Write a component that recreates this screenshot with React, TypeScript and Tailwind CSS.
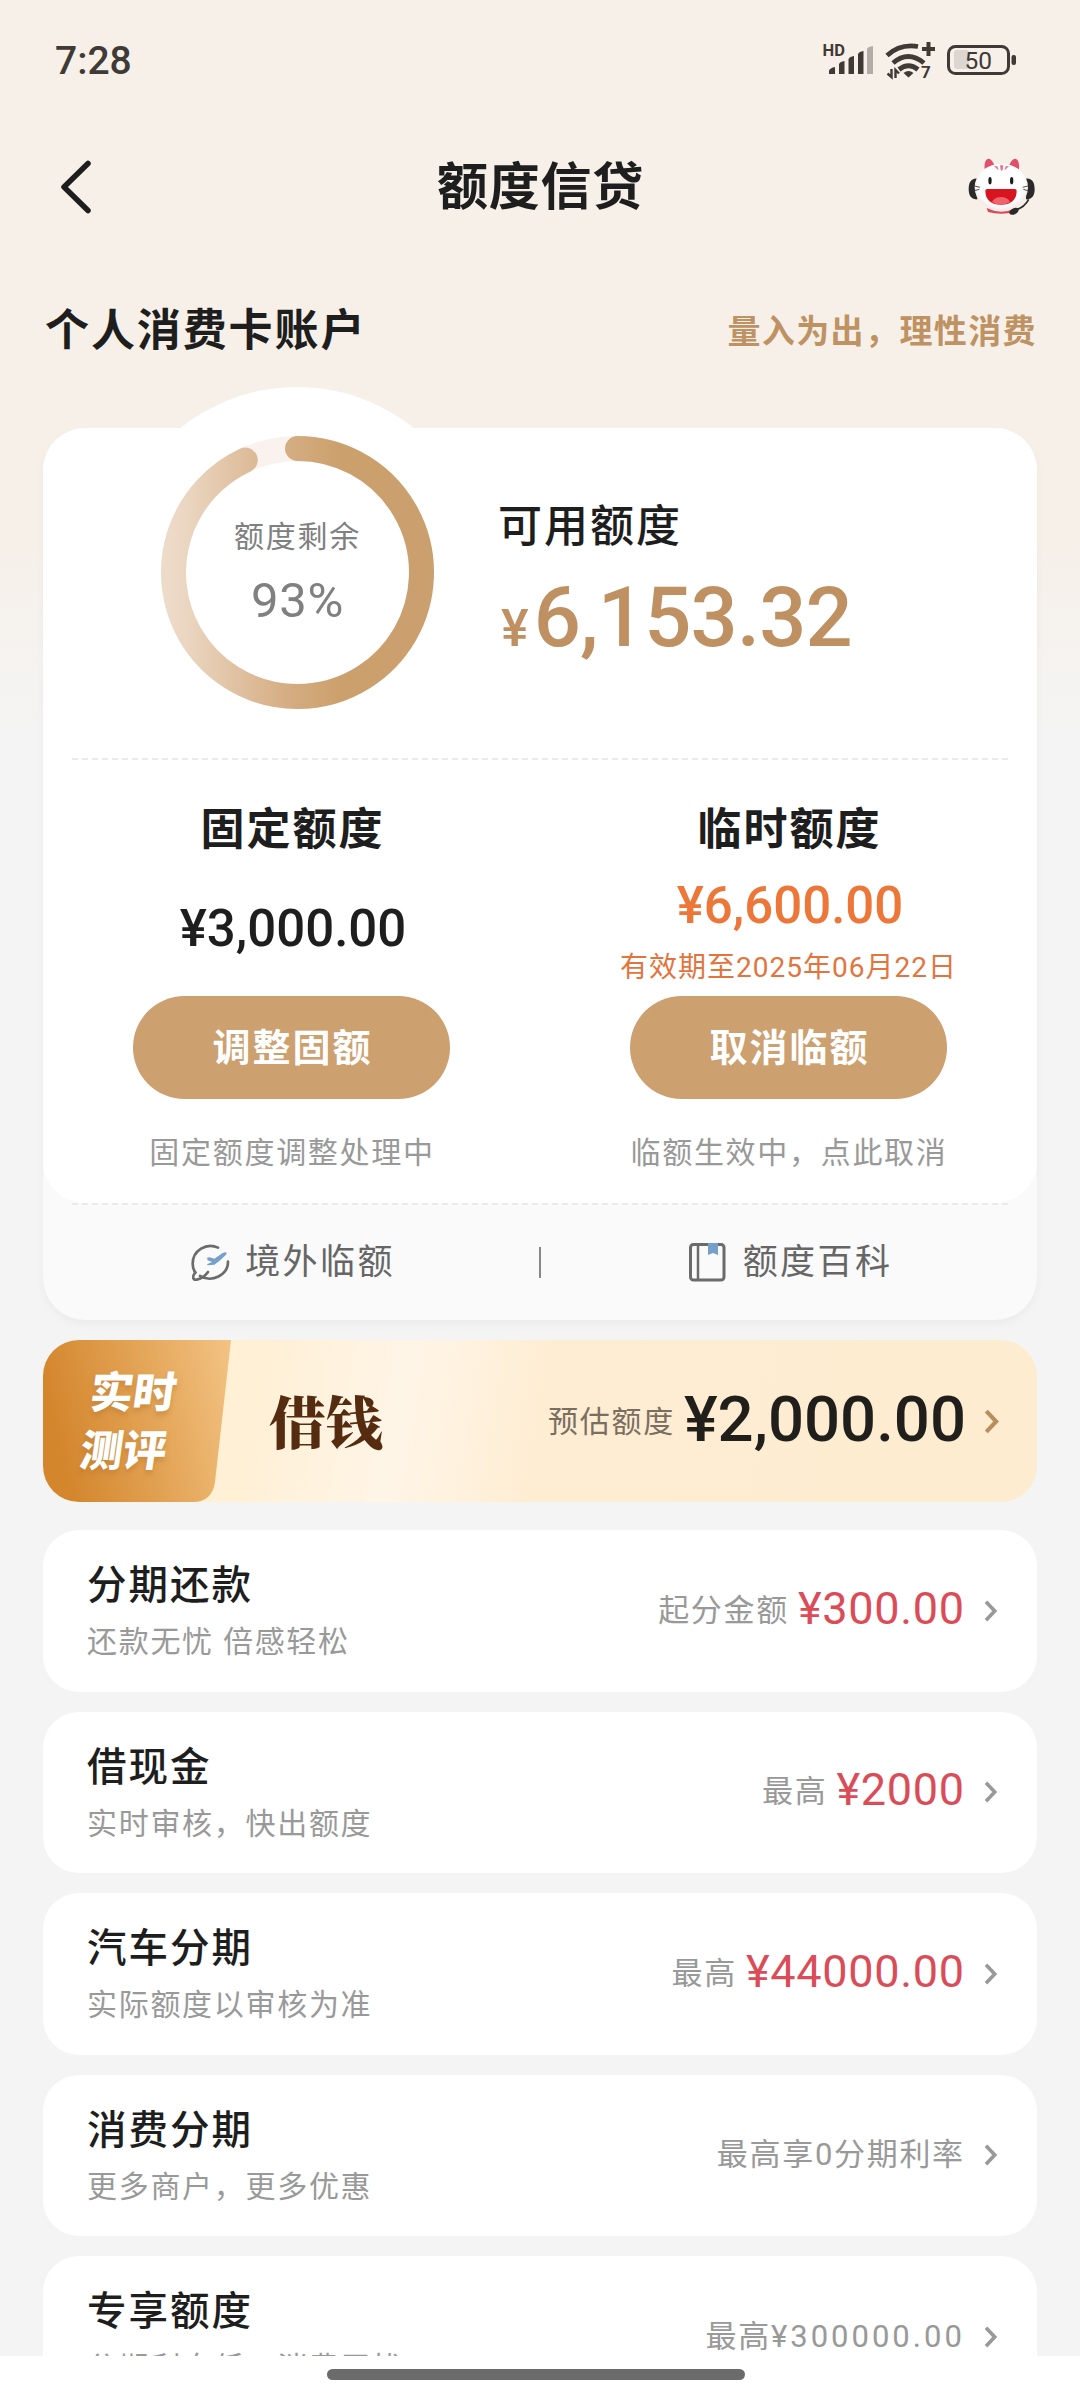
import type { ReactNode } from "react";

interface ProductItem {
  title: string;
  subtitle: string;
  label: string;
  amount?: string;
  plainAmount?: string;
}

const PRODUCTS: ProductItem[] = [
  { title: "分期还款", subtitle: "还款无忧 倍感轻松", label: "起分金额", amount: "¥300.00" },
  { title: "借现金", subtitle: "实时审核，快出额度", label: "最高", amount: "¥2000" },
  { title: "汽车分期", subtitle: "实际额度以审核为准", label: "最高", amount: "¥44000.00" },
  { title: "消费分期", subtitle: "更多商户，更多优惠", label: "最高享0分期利率" },
  { title: "专享额度", subtitle: "分期利息低，消费无忧", label: "最高", plainAmount: "¥300000.00" },
];

function StatusIcons() {
  return (
    <svg width="200" height="44" viewBox="820 38 200 44" fill="none" className="overflow-visible" aria-hidden="true">
      <text x="822.500" y="56" fontSize="16.5" fontWeight="700" fill="#3f3a36" fontFamily="Roboto, sans-serif">
        HD
      </text>
      <g fill="#3f3a36">
        <path d="M829 74v-3.500q1-2.500 6-3.500v7z" />
        <path d="M839 74V64q1-2.500 5.500-3v13z" />
        <path d="M848.500 74V59q1-2.500 5.500-3v18z" />
        <path d="M858 74V54q1-2.500 5.500-3v23z" />
      </g>
      <path d="M867 74V49q1-2.500 6-3v28z" fill="#b3aca6" />
      <g stroke="#3f3a36" strokeWidth="4.800">
        <path d="M887 55.500Q900 43.500 918 46.500" />
        <path d="M893 63q15-13 31 0" />
        <path d="M899 69.500q9.500-7.500 19 0" />
        <path d="M928.500 42v14M922 49h13" strokeWidth="4" />
      </g>
      <path d="M903.500 73q5-4 10 0l-5 4.500z" fill="#3f3a36" />
      <path d="M891.500 69v8l-4-3.500M895.500 78v-8l3.500 3.500" stroke="#3f3a36" strokeWidth="2.400" />
      <text x="921" y="78" fontSize="17" fontWeight="700" fill="#3f3a36" fontFamily="Roboto, sans-serif">
        7
      </text>
      <rect x="948.500" y="46.500" width="60" height="27" rx="7" stroke="#3f3a36" strokeWidth="3" />
      <rect x="954" y="50" width="15" height="19" rx="3" fill="#dcd6d0" />
      <rect x="1011.500" y="55" width="4.500" height="10" rx="2" fill="#3f3a36" />
      <text x="964.500" y="69" fontSize="24.500" fill="#3f3a36" fontFamily="Roboto, sans-serif">
        50
      </text>
    </svg>
  );
}

function ServiceCat() {
  return (
    <svg width="67" height="58" viewBox="0 0 201 174" aria-hidden="true">
      <defs>
        <radialGradient id="face" cx="0.5" cy="0.45" r="0.6">
          <stop offset="0.7" stopColor="#ffffff" />
          <stop offset="1" stopColor="#ecdcd8" />
        </radialGradient>
      </defs>
      <path d="M28 62C8 60 2 76 2 94s8 32 26 30zM174 62c20-2 26 14 26 32s-8 32-26 30z" fill="#2b2929" />
      <path d="M46 44C44 18 50 4 58 2c10-2 20 10 26 24zM157 44c2-26-4-40-12-42-10-2-20 10-26 24z" fill="#fbeeee" />
      <path d="M50 34C48 14 54 3 61 2c8 0 14 10 18 19zM153 34c2-20-4-31-11-32-8 0-14 10-18 19z" fill="#e14f69" />
      <path d="M56 150q44 22 88 0l-4 12q-40 10-80 0z" fill="#d9475a" />
      <ellipse cx="100" cy="88" rx="80" ry="71" fill="url(#face)" />
      <path d="M96 22h10l-2 14q-3 4-6 0zM78 24l9 9 5 4-4-12zM123 24l-9 9-5 4 4-12z" fill="#e8758a" />
      <ellipse cx="66" cy="68" rx="5" ry="11" fill="#1d1b1b" />
      <ellipse cx="131" cy="68" rx="5" ry="11" fill="#1d1b1b" />
      <path d="M20 84l16 4M20 98l14-4M180 84l-16 4M180 98l-14-4" stroke="#5b5050" strokeWidth="3" />
      <path d="M52 98q0-5 6-5h82q6 0 6 5c0 28-18 42-47 42S52 126 52 98z" fill="#d81420" />
      <path d="M72 132q8-15 27-15t27 15q-11 8-27 8t-27-8z" fill="#f0626c" />
      <path d="M182 124q-12 24-40 32" stroke="#2b2929" strokeWidth="5" fill="none" />
      <ellipse cx="138" cy="160" rx="15" ry="9" transform="rotate(-28 138 160)" fill="#2b2929" />
    </svg>
  );
}

function QuotaRing() {
  const length = 2 * Math.PI * 124;

  return (
    <div className="relative h-[273px] w-[273px]">
      <svg width="273" height="273" viewBox="0 0 273 273" fill="none" aria-hidden="true">
        <defs>
          <linearGradient id="ring" gradientUnits="userSpaceOnUse" x1="0" y1="0" x2="273" y2="0">
            <stop offset="0" stopColor="#eedccb" />
            <stop offset="0.1" stopColor="#ead5c0" />
            <stop offset="0.45" stopColor="#d6ae84" />
            <stop offset="0.66" stopColor="#cba06c" />
            <stop offset="1" stopColor="#cba06f" />
          </linearGradient>
        </defs>
        <circle cx="136.500" cy="136.500" r="124" stroke="#f9f2ef" strokeWidth="25" />
        {/* Drawn as a path so the gradient keeps its horizontal direction */}
        <path
          d="M136.500 12.500a124 124 0 1 1-.01 0"
          stroke="url(#ring)"
          strokeWidth="25"
          strokeLinecap="round"
          strokeDasharray={`${length * 0.93} ${length}`}
        />
      </svg>
      <div className="absolute inset-0 flex flex-col items-center pt-[76px] text-[#808080]">
        <span className="text-[30px] leading-[50px] tracking-[1.7px]">额度剩余</span>
        <span className="mt-[13px] text-[49px] leading-[52px] tracking-[0.6px]">93%</span>
      </div>
    </div>
  );
}

function DashedLine() {
  return (
    <div className="mx-[29px] h-[2px] bg-[repeating-linear-gradient(90deg,#ebebeb_0_6px,transparent_6px_10px)]" />
  );
}

function Chevron({ className, size = 24 }: { className?: string; size?: number }) {
  return (
    <svg width={size * 0.6} height={size} viewBox="0 0 14 24" fill="none" className={className} aria-hidden="true">
      <path d="M2 2l9.500 10L2 22" stroke="currentColor" strokeWidth="4" />
    </svg>
  );
}

interface QuotaColumnProps {
  title: string;
  children: ReactNode;
  action: string;
  note: string;
}

function QuotaColumn({ title, children, action, note }: QuotaColumnProps) {
  return (
    <div className="flex flex-1 flex-col items-center pt-[38px]">
      <h3 className="pl-[2px] text-[44px] font-bold leading-[64px] tracking-[2px]">{title}</h3>
      <div className="flex h-[134px] flex-col items-center justify-center">{children}</div>
      <button className="h-[103px] w-[317px] rounded-full bg-[#cca06f] pl-[2px] pt-[2px] text-[38px] font-bold tracking-[2px] text-white">
        {action}
      </button>
      <p className="pl-[1px] text-[30px] leading-[108px] tracking-[1.7px] text-[#999]">{note}</p>
    </div>
  );
}

function OverseasIcon() {
  return (
    <svg width="40" height="39" viewBox="0 0 120 117" fill="none" aria-hidden="true">
      <path
        d="M84 14C50-2 8 22 8 62c0 12 3 20 8 27M114 56c0 40-48 64-84 43"
        stroke="#6b6b6b"
        strokeWidth="8"
        strokeLinecap="round"
      />
      <path
        d="M16 88c-10 12-8 24 4 22 12-2 26-12 34-23"
        stroke="#6b6b6b"
        strokeWidth="8"
        strokeLinecap="round"
      />
      <path
        d="M51 44l8-1 14 4 25-17q10-4 12 0 1 3-5 8L88 54 73 65l-20 2-2-3 15-7-13-5z"
        fill="#74a0ca"
      />
    </svg>
  );
}

function BookIcon() {
  return (
    <svg width="37" height="39" viewBox="0 0 37 39" fill="none" aria-hidden="true">
      <rect x="1.500" y="1.500" width="33.500" height="35.500" rx="3" stroke="#6b6b6b" strokeWidth="3" />
      <path d="M9 2v35" stroke="#6b6b6b" strokeWidth="2.500" />
      <path d="M19 0h10v12l-5-2-5 2z" fill="#74a0ca" />
    </svg>
  );
}

function LoanBanner() {
  return (
    <div className="mt-5 flex h-[162px] shrink-0 items-center overflow-hidden rounded-[36px] bg-[linear-gradient(100deg,#fff0d5_0%,#fff0d6_22%,#fff5e7_36%,#feedd3_50%,#feecd0_100%)]">
      <div className="relative h-full w-[188px]">
        <svg width="188" height="162" viewBox="0 0 188 162" className="absolute inset-0" aria-hidden="true">
          <defs>
            <linearGradient id="tab" x1="0" y1="0.200" x2="1" y2="0">
              <stop offset="0" stopColor="#d4862d" />
              <stop offset="0.5" stopColor="#e3a456" />
              <stop offset="1" stopColor="#f3c384" />
            </linearGradient>
          </defs>
          <path d="M0 0h188l-16 142q-3 20-22 20H0z" fill="url(#tab)" />
        </svg>
        <div className="relative flex -skew-x-8 flex-col pt-[24px] text-[43px] font-black leading-[58px] text-white [text-shadow:0_4px_5px_#b8762f80]">
          <span className="pl-[45px]">实时</span>
          <span className="pl-[43px]">测评</span>
        </div>
      </div>
      <span className="-mt-[4px] ml-[38px] font-['Noto_Serif_CJK_SC','Noto_Sans_CJK_SC',serif] text-[57px] font-black leading-[80px] text-[#552c10]">
        借钱
      </span>
      <div className="ml-auto flex items-center pr-[38px]">
        <span className="text-[30px] tracking-[1.7px] text-[#7a6e60]">预估额度</span>
        <span className="ml-[9px] -mt-[2px] text-[63.5px] font-medium leading-[80px] text-[#211f1c]">¥2,000.00</span>
        <Chevron className="ml-[18px] text-[#b98e5f]" size={25} />
      </div>
    </div>
  );
}

function ProductRow({ title, subtitle, label, amount, plainAmount }: ProductItem) {
  return (
    <div className="flex h-[161.500px] shrink-0 items-center rounded-[36px] bg-white pl-[44px] pr-[40px]">
      <div className="flex h-full flex-col pt-[31px]">
        <h4 className="text-[39.5px] font-medium leading-[50px] tracking-[2px]">{title}</h4>
        <p className="mt-[9px] text-[30px] leading-[44px] tracking-[1.7px] text-[#999]">{subtitle}</p>
      </div>
      <div className="ml-auto flex items-center text-[31px] tracking-[1.7px] text-[#999]">
        <span>{label}</span>
        {amount && (
          <span className="-mt-[4px] ml-[9px] text-[45px] leading-[60px] tracking-[0.7px] text-[#db4c59]">{amount}</span>
        )}
        {plainAmount && <span className="tracking-[3px]">{plainAmount}</span>}
        <Chevron className="ml-[19px] text-[#999]" size={22} />
      </div>
    </div>
  );
}

export default function App() {
  return (
    <div
      lang="zh-CN"
      className="flex h-[2400px] w-[1080px] flex-col overflow-hidden bg-[linear-gradient(180deg,#f7f0e9_0px,#f7f0e9_540px,#f4f4f4_740px)] font-[Roboto,'Noto_Sans_CJK_SC',sans-serif] text-[#1e1e1e]"
    >
      <div className="flex h-[2356px] flex-col overflow-hidden px-[43px]">
        <div className="flex h-[120px] shrink-0 items-center justify-between pl-[12px] pr-[17px] text-[#3f3a36]">
          <span className="pt-[2px] text-[39px] font-medium">7:28</span>
          <StatusIcons />
        </div>

        <header className="grid h-[134px] shrink-0 grid-cols-[1fr_auto_1fr] items-center">
          <svg width="32" height="54" viewBox="0 0 32 54" fill="none" className="ml-[17px]" aria-hidden="true">
            <path
              d="M28 3.500L4 27l24 23.500"
              stroke="#1e1e1e"
              strokeWidth="5.500"
              strokeLinecap="round"
              strokeLinejoin="round"
            />
          </svg>
          <h1 className="pl-[1px] pt-[3px] text-[51px] font-bold tracking-[0.8px]">额度信贷</h1>
          <div className="flex justify-end pr-[2px]">
            <ServiceCat />
          </div>
        </header>

        <div className="flex h-[174px] shrink-0 items-start justify-between pt-[47px]">
          <h2 className="pl-[2px] text-[44px] font-bold leading-[60px] tracking-[1.9px]">个人消费卡账户</h2>
          <span className="text-[33px] font-bold leading-[62px] tracking-[1.4px] text-[#be9263]">
            量入为出，理性消费
          </span>
        </div>

        <section className="relative h-[892px] shrink-0 rounded-[42px] bg-[#fafafa] shadow-[0_4px_8px_#0000000a]">
          <div className="absolute -top-[41px] left-[68px] h-[372px] w-[372px] rounded-full bg-white" />
          <div className="relative h-[775px] rounded-[42px] bg-white">
            <div className="flex h-[330px] pl-[118px] pt-2">
              <QuotaRing />
              <div className="ml-[64px] flex flex-col pt-[61px]">
                <span className="text-[44px] font-medium leading-[60px] tracking-[2px]">可用额度</span>
                <div className="mt-[21px] flex items-baseline pl-[3px] font-medium leading-[80px] text-[#be9062]">
                  <span className="text-[52px]">¥</span>
                  <span className="ml-[5px] text-[83px] tracking-[-0.8px]">6,153.32</span>
                </div>
              </div>
            </div>
            <DashedLine />
            <div className="flex">
              <QuotaColumn title="固定额度" action="调整固额" note="固定额度调整处理中">
                <span className="pl-[3px] text-[51px] font-medium">¥3,000.00</span>
              </QuotaColumn>
              <QuotaColumn title="临时额度" action="取消临额" note="临额生效中，点此取消">
                <span className="mt-[4px] pl-[3px] text-[51px] font-medium leading-[74px] text-[#ec7738]">
                  ¥6,600.00
                </span>
                <span className="text-[28px] leading-[50px] tracking-[1px] text-[#e4743d]">
                  有效期至2025年06月22日
                </span>
              </QuotaColumn>
            </div>
          </div>
          <DashedLine />
          <div className="relative flex h-[115px] items-center text-[35px] tracking-[2.4px] text-[#666]">
            <div className="flex flex-1 items-center justify-center gap-[15px] pl-[3px]">
              <OverseasIcon />
              <span className="pt-[2px]">境外临额</span>
            </div>
            <div className="h-[31px] w-[2px] bg-[#888]" />
            <div className="flex flex-1 items-center justify-center gap-[17px] pl-[3px]">
              <BookIcon />
              <span className="pt-[2px]">额度百科</span>
            </div>
          </div>
        </section>

        <LoanBanner />

        <div className="mt-7 flex flex-col gap-5">
          {PRODUCTS.map((item) => (
            <ProductRow key={item.title} {...item} />
          ))}
        </div>
      </div>

      <div className="flex h-[44px] shrink-0 justify-center bg-white pr-[8px] pt-[13px]">
        <div className="h-[11px] w-[418px] rounded-full bg-[#6b6b6b]" />
      </div>
    </div>
  );
}
